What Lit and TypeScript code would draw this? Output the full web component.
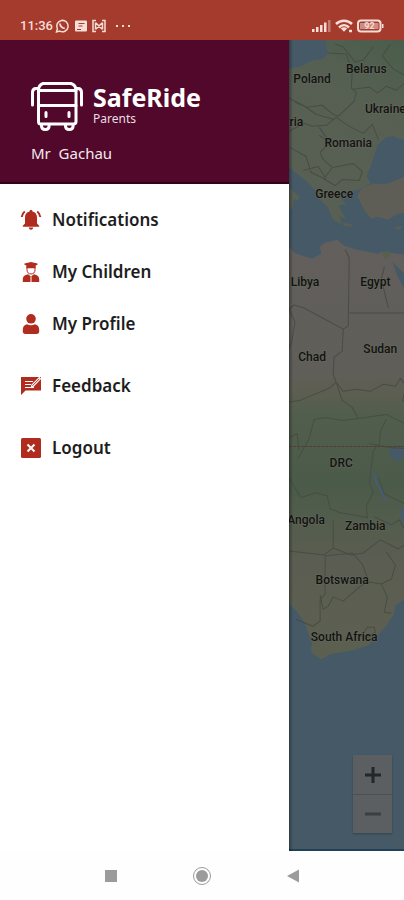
import { LitElement, html, css, svg } from "lit";
import { customElement } from "lit/decorators.js";

const icons = {
  bell: svg`<path d="M10 0c1 0 1.500.6 1.500 1.400 2.900.7 4.500 2.900 4.500 6v6l2.200 2.300v1.100H1.800v-1.100L4 13.400v-6c0-3.100 1.600-5.300 4.500-6C8.500.6 9 0 10 0z"/><path d="M7.800 17.500h4.400c-.2 1.500-1.100 2.200-2.200 2.200s-2-.7-2.200-2.200z"/><path class="line" d="M3.800 1.500C2 2.800 1 4.500.7 7M16.200 1.500C18 2.800 19 4.500 19.300 7"/>`,
  child: svg`<path d="M3.500 1.500 10 0l6.500 1.500v1.200L14.700 3.500v2.700H5.300V3.500L3.500 2.700z"/><path class="thin" d="M6 5.500v2.300c0 2.600 1.500 4.200 4 4.200s4-1.600 4-4.200V5.500"/><path d="M7 12.200 10 14.500l3-2.300c3.600.7 5.200 2.400 5.200 5.100V20H1.800v-2.700c0-2.700 1.600-4.400 5.200-5.100z"/><path class="cut" d="M10 14.500V20"/>`,
  person: svg`<circle cx="10" cy="4.800" r="4.800"/><path d="M6 10.200c2.500 1.400 5.500 1.400 8 0 2.700.5 4.200 2.500 4.200 5.800v1.500c0 1.600-1 2.500-2.700 2.500h-11c-1.700 0-2.700-.9-2.700-2.500V16c0-3.300 1.500-5.300 4.200-5.800z"/>`,
  feedback: svg`<path d="M0 1h20v13.500H4.500L0 19z"/><path class="cut" d="M4 5.500h8M4 8.500h6M4 11.500h9"/><path class="cutfill" d="m9.800 11.500.6-2.700L18.300.7l2 2-7.900 8.200z"/><path class="thin" d="m11.400 9.800 7-7"/>`,
  close: svg`<rect width="20" height="20" rx="1.500"/><path class="cross" d="m6.500 6.500 7 7M13.500 6.500l-7 7"/>`,
};

const menu = [
  [
    { label: "Notifications", icon: icons.bell },
    { label: "My Children", icon: icons.child },
    { label: "My Profile", icon: icons.person },
  ],
  [{ label: "Feedback", icon: icons.feedback }],
  [{ label: "Logout", icon: icons.close }],
];

const places: [string, number, number][] = [
  ["Poland", 312, 83],
  ["Belarus", 366, 73],
  ["Ukraine", 385, 113],
  ["Austria", 284, 126],
  ["Romania", 348, 147],
  ["Greece", 334, 197],
  ["Libya", 305, 285],
  ["Egypt", 375, 285],
  ["Chad", 312, 360],
  ["Sudan", 380, 352],
  ["DRC", 341, 465],
  ["Angola", 306, 522],
  ["Zambia", 365, 528],
  ["Botswana", 342, 582],
  ["South Africa", 344, 639],
];

@customElement("status-bar")
export class StatusBar extends LitElement {
  static styles = css`
    :host {
      display: flex;
      align-items: center;
      height: 28px;
      padding: 12px 20px 0;
      background: #a43b2c;
      color: #f8dcd6;
      font: 500 13px/16px Roboto, sans-serif;
    }
    .left, .right { display: flex; align-items: center; }
    .left { flex: 1; gap: 2px; }
    .right { gap: 4px; }
  `;
  render() {
    return html`
      <div class="left">
        <span>11:36</span>
        <svg width="76" height="16" viewBox="0 0 76 16" fill="none" stroke="currentColor" aria-hidden="true">
          <path stroke-width="1.500" d="M1.500 14l.9-3.200a5.700 5.700 0 1 1 2.300 2.300z"/>
          <path stroke-width="1.800" d="M5 5.500c0 2.500 2.300 4.700 4.800 4.800"/>
          <rect x="20" y="2.500" width="12" height="11" rx="1" fill="currentColor" stroke="none"/>
          <path stroke="#a43b2c" d="M23.500 5.500h6M23.500 8h4M22 11.500h4"/>
          <path d="M41 2.500h-3v11h3M47 2.500h3v11h-3M40.500 4.500v7M47.500 4.500v7M41 5l6 6M47 5l-6 6" stroke-width="1.500"/>
          <path d="M61 8h2M67 8h2M73 8h2" stroke-width="2"/>
        </svg>
      </div>
      <div class="right">
        <svg width="19" height="14" viewBox="0 0 19 14" fill="currentColor" aria-hidden="true">
          <path d="M0 10h2.500v3H0zM4 8h2.500v5H4zM8 6h2.500v7H8zM12 3.500h2.500V13H12z"/>
          <path opacity=".4" d="M16 1h2.500v12H16z"/>
        </svg>
        <svg width="18" height="14" viewBox="0 0 18 14" fill="none" stroke="currentColor" stroke-width="2.500" aria-hidden="true">
          <path d="M1 5c4.500-4.500 11.500-4.500 16 0M4 8.500c3-3 7-3 10 0"/>
          <path d="m5.800 9.500 3.200 3.300 3.200-3.300c-1.800-1.800-4.600-1.800-6.400 0z" fill="currentColor" stroke="none"/>
          <path d="M14 12h3"/>
        </svg>
        <svg width="27" height="14" viewBox="0 0 27 14" aria-hidden="true">
          <rect x="1" y="1.500" width="22.500" height="11" rx="3" fill="none" stroke="currentColor" stroke-width="2"/>
          <rect x="3" y="4" width="18.500" height="6" fill="currentColor" opacity=".5"/>
          <path d="M25 5h1.500v4H25z" fill="currentColor"/>
          <text x="12.500" y="10" text-anchor="middle" font-size="9" font-weight="700" fill="currentColor">92</text>
        </svg>
      </div>
    `;
  }
}

@customElement("side-drawer")
export class SideDrawer extends LitElement {
  static styles = css`
    :host {
      display: block;
      background: #fff;
      font-family: "Noto Sans", "Open Sans", sans-serif;
    }
    .header {
      box-sizing: border-box;
      height: 144px;
      padding: 41px 31px 0;
      background: #52082b;
      border-bottom: 2px solid #2d0418;
      color: #fff;
    }
    .brand { display: flex; align-items: flex-start; gap: 10px; }
    h1 { margin: 0; font-size: 25px; line-height: 32px; font-weight: 700; }
    .sub { margin: 0; font-size: 12px; line-height: 12px; color: #eadde3; }
    .user { margin: 12px 0 0; font-size: 15px; line-height: 20px; white-space: pre; color: #f3e8ed; }
    nav { padding-top: 10px; }
    ul { list-style: none; margin: 0 0 10px; padding: 0; }
    button {
      display: flex;
      align-items: center;
      gap: 11px;
      width: 100%;
      height: 52px;
      padding: 0 21px;
      border: 0;
      background: none;
      color: #1d1d1d;
      font: 600 17px/24px "Noto Sans", "Open Sans", sans-serif;
      text-align: left;
    }
    .icon { fill: #b02c1f; overflow: visible; }
    .line, .thin, .cut, .cross { fill: none; stroke: #b02c1f; stroke-width: 2; }
    .thin { stroke-width: 1; }
    .cut { stroke: #fff; stroke-width: 1; }
    .cutfill { fill: #fff; }
    .cross { stroke: #fff; }
  `;
  render() {
    return html`
      <header class="header">
        <div class="brand">
          <svg width="52" height="50" viewBox="0 0 52 50" fill="none" stroke="#fff" stroke-width="3" stroke-linejoin="round" stroke-linecap="round" aria-hidden="true">
            <path d="M12 2.500h28q5 1.500 5 7v31q0 2.500-2.500 2.500h-33Q7.500 43 7.500 40.500v-31q0-5.500 4.500-7z"/>
            <path d="M8 9.500h37M8 24.500h37M7.500 7.500H5q-3.500 0-3.500 4V24M45 7.500h2q3.500 0 3.500 4V24"/>
            <path d="M15 31.500v4M38 31.500v4"/>
            <path d="M10.500 43.500v1.500q0 3.500 3.800 3.500t3.800-3.500v-1.500M34.500 43.500v1.500q0 3.500 3.800 3.500t3.800-3.500v-1.500"/>
          </svg>
          <div>
            <h1>SafeRide</h1>
            <p class="sub">Parents</p>
          </div>
        </div>
        <p class="user">Mr  Gachau</p>
      </header>
      <nav aria-label="Main">
        ${menu.map(
          (group) => html`<ul>
            ${group.map(
              (item) => html`<li>
                <button type="button">
                  <svg class="icon" width="20" height="20" viewBox="0 0 20 20" aria-hidden="true">${item.icon}</svg>
                  <span>${item.label}</span>
                </button>
              </li>`
            )}
          </ul>`
        )}
      </nav>
    `;
  }
}

@customElement("world-map")
export class WorldMap extends LitElement {
  static styles = css`
    :host {
      display: block;
      position: relative;
      overflow: hidden;
      background: #465966;
      box-shadow: inset 0 -2px #1f4257;
    }
    .map {
      position: absolute;
      inset: 0 0 2px;
      width: 100%;
      height: calc(100% - 2px);
    }
    .edge {
      position: absolute;
      inset: 0 auto 0 0;
      width: 4px;
      background: linear-gradient(90deg, #0005, #0000);
    }
    .sea { fill: #465966; }
    .borders { fill: none; stroke: #484d44; stroke-width: 1; stroke-linejoin: round; }
    .label {
      fill: #111310;
      stroke: #67695f;
      stroke-width: 1;
      paint-order: stroke;
      font: 500 12px Roboto, sans-serif;
      text-anchor: middle;
    }
    .zoom {
      position: absolute;
      right: 12px;
      bottom: 18px;
      display: grid;
      background: #5b5f61;
      box-shadow: 0 1px 2px #0004;
    }
    .zoom button {
      display: grid;
      place-items: center;
      width: 39px;
      height: 39px;
      padding: 0;
      border: 0;
      background: none;
      color: #24272a;
    }
    .zoom button + button { border-top: 1px solid #4b5053; color: #3b3f42; }
  `;
  render() {
    return html`
      <svg class="map" viewBox="289 40 115 809" preserveAspectRatio="xMinYMin slice" role="img" aria-label="Map of Europe and Africa">
        <defs>
          <linearGradient id="africa" gradientUnits="userSpaceOnUse" x1="0" y1="240" x2="0" y2="660">
            <stop offset="0" stop-color="#625f5c"/>
            <stop offset=".31" stop-color="#605e59"/>
            <stop offset=".36" stop-color="#5d5e52"/>
            <stop offset=".41" stop-color="#525e4d"/>
            <stop offset=".58" stop-color="#4b5b49"/>
            <stop offset=".67" stop-color="#535d4d"/>
            <stop offset=".76" stop-color="#5b5d52"/>
            <stop offset="1" stop-color="#5c6050"/>
          </linearGradient>
          <linearGradient id="europe" gradientUnits="userSpaceOnUse" x1="404" y1="40" x2="340" y2="150">
            <stop offset="0" stop-color="#495d4b"/>
            <stop offset=".5" stop-color="#566052"/>
            <stop offset="1" stop-color="#585f53"/>
          </linearGradient>
        </defs>
        <path fill="url(#europe)" d="M289 69l13-3 9-5 12-2 5-6-3-13h79v100l-12-4-9 4 3 8-10 4-5 12-4 12 3 7-11 6-15 3-3 6 5 6-8 1 8 14-7-4 3 9-9-5-5-12-8-8-4-8-9-10-13-10-6-5z"/>
        <path class="sea" d="M366 176l5-11 6-20 9-8 7-1 4 5-4 5 11 8v28l-13-4-14 4z"/>
        <path fill="#5e5e56" d="M404 176v36l-7 1-9 6-11-3-6 2-6-7-8-15 4-8 12-5 12 1 8-3z"/>
        <path fill="#585f53" d="M289 187l4 4 7 5-3 5-3-3-1 8-4 5zM343 222l8 1 1 3-9-1zM395 226l7-1-3 4-5-1z"/>
        <path fill="url(#africa)" d="M289 246l5 6 18 6 9-5-1-7 5-4 12-3 7 6 13 4 20 4 5-2 22 3v343l-9 6-2 10-9 13-16 17-16 5-22 4-9 5-10-7 1-9-8-22-9-12-6-5z"/>
        <path fill="#56604d" d="M381 251l8-1 1 4-5 5z"/>
        <path class="sea" d="M392 261l12 12v15l-7-13zM389 447l8-3 7 2-1 11-6 3-8-6z"/>
        <path d="M404 504v18l-3-9zM374 472l2 9 5 8 4 10" fill="none" stroke="#465b78" stroke-width="2"/>
        <g class="borders">
          <path d="M328 53l18 1 6 18-1 16 5 4-2 9-16 15-5-2-11-9-15 2-12-5M335 44l8 3 12 15 8-2 10-13M352 89l17-2 8 6 9-7 10 4 8-7M336 117l-10 8-14 1-8-3-15 8M336 117l13 9 14 7 9-9 6 15M319 127l11 15-10 10 3 7 9 8-8 11-13-6-5-16-16-9M330 142l-11-7M333 167l20-4 9 8-3 9-17-1-7 6-12-7M289 98l14 7 13 9 17 5M303 170l15-4 8 12M390 44l-8 12 11 13 11 6"/>
          <path d="M345 249l4 8-1 68-5 3-39-21-10-3-5 4M349 312h55M384 266l-3 12 7 29M343 328l-1 22-8 6-1 17 3 8M289 308l6 13-3 18-3 9M289 401l11-2 29-12 7-6 7 9 13-2 14 2 13-7 12 2 5-8 6 8-4 14 8 6M336 381l6 18 10 7 6 11 28-4 18 9M289 436l8-4 2 17M314 418l11-2 17 3 16-2M314 418l-5 19-11 20M386 418l-6 12-1 12-6 7-4 32 4 10-7 13 1 12-9-2-18-3-10-4-3-13-12-3-14 5-13-21M369 442l20 4 15 1M378 476l6 16 20 10M333 519v27l18 7 12-2 17-13 18 9 6-4M289 549l35 4 9-7M325 554v38l-5 5v22l-7 5-10-4-7-3M325 554l27-3 10 11 6 16-9 7-16 14-10-4-5 9-5 3-3-14M362 579l19 3 10-5 4-14-9-13M381 582l6 13-3 15 7 1M361 634l6-9 7 0 1 5-7 5zM374 515l17 8 8-5 5 9"/>
        </g>
        <path d="M289 445h115" stroke="#553d35" stroke-width="1" stroke-dasharray="3 1"/>
        ${places.map(([name, x, y]) => svg`<text class="label" x=${x} y=${y}>${name}</text>`)}
      </svg>
      <div class="edge"></div>
      <div class="zoom">
        <button type="button" aria-label="Zoom in">
          <svg width="18" height="18" viewBox="0 0 18 18" stroke="currentColor" stroke-width="3"><path d="M1 9h16M9 1v16"/></svg>
        </button>
        <button type="button" aria-label="Zoom out">
          <svg width="18" height="18" viewBox="0 0 18 18" stroke="currentColor" stroke-width="3"><path d="M1 9h16"/></svg>
        </button>
      </div>
    `;
  }
}

@customElement("app-root")
export class AppRoot extends LitElement {
  static styles = css`
    :host {
      display: grid;
      grid-template-rows: auto 1fr auto;
      min-height: 100vh;
      background: #fefefe;
    }
    .body { display: grid; grid-template-columns: 5fr 2fr; }
    .system {
      display: flex;
      justify-content: center;
      gap: 67px;
      padding: 13px 0 12px;
    }
    .system button {
      display: grid;
      place-items: center;
      width: 24px;
      height: 24px;
      padding: 0;
      border: 0;
      background: none;
      color: #9b9b9b;
    }
  `;
  render() {
    return html`
      <status-bar></status-bar>
      <main class="body">
        <side-drawer></side-drawer>
        <world-map></world-map>
      </main>
      <div class="system">
        <button type="button" aria-label="Recent apps">
          <svg width="20" height="20" viewBox="0 0 20 20" fill="currentColor"><path d="M4 4h12v12H4z"/></svg>
        </button>
        <button type="button" aria-label="Home">
          <svg width="20" height="20" viewBox="0 0 20 20" fill="currentColor"><circle cx="10" cy="10" r="6"/><circle cx="10" cy="10" r="8.500" fill="none" stroke="currentColor"/></svg>
        </button>
        <button type="button" aria-label="Back">
          <svg width="20" height="20" viewBox="0 0 20 20" fill="currentColor"><path d="M16 3.500v13L4 10z"/></svg>
        </button>
      </div>
    `;
  }
}
